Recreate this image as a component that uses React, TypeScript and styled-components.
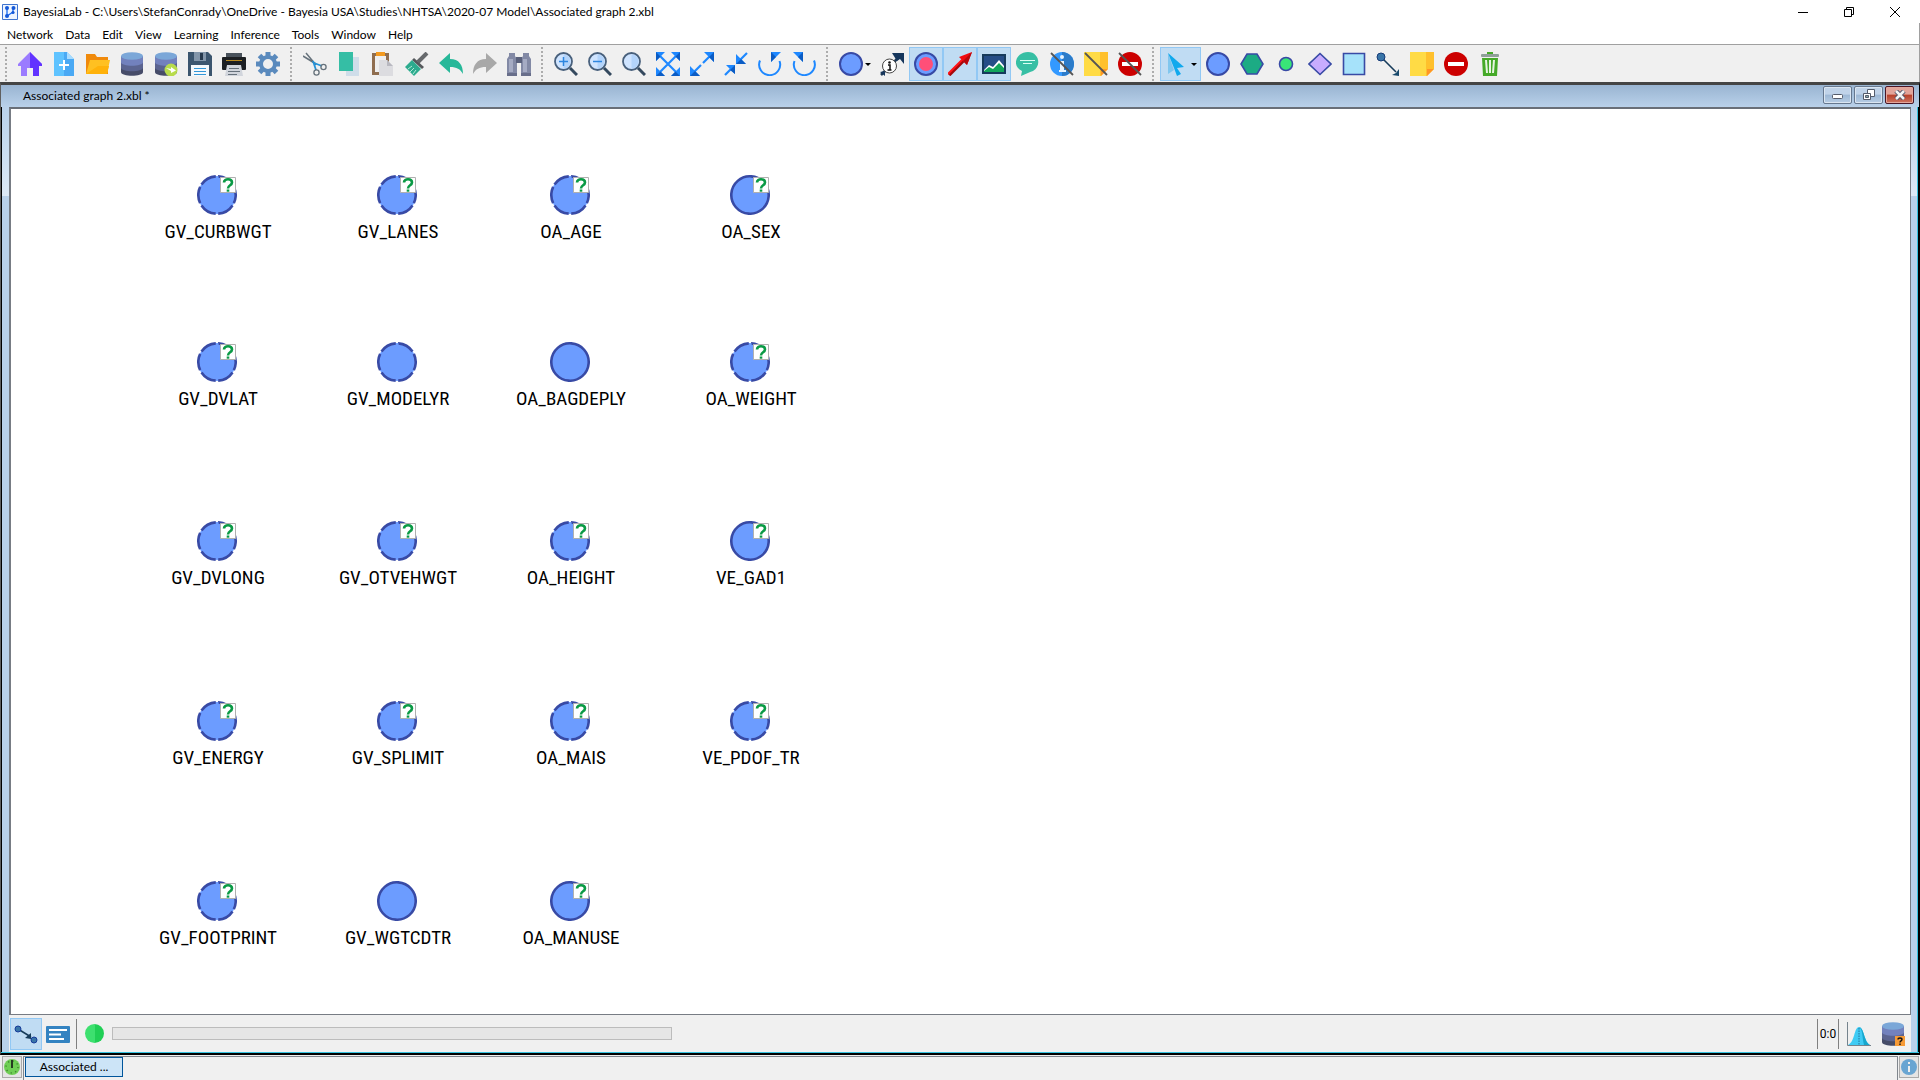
import React from "react";
import styled, { createGlobalStyle } from "styled-components";

const Global = createGlobalStyle`
  *, *::before, *::after { box-sizing: border-box; }
  body { margin: 0; background: #f0f0f0; }
  button { font: inherit; color: inherit; }
`;

const ui = `Lato, "Open Sans", sans-serif`;

const Window = styled.div`
  height: 100vh;
  display: flex;
  flex-direction: column;
  background: #f0f0f0;
  color: #000;
  font: 12px/16px ${ui};
  overflow: hidden;
`;

const TitleBar = styled.header`
  display: flex;
  align-items: center;
  height: 23px;
  padding: 0 2px;
  background: #fff;
`;

const AppIcon = styled.svg`
  width: 16px;
  height: 16px;
  display: block;
`;

const TitleText = styled.h1`
  flex: 1;
  margin: 0 0 0 5px;
  font: 12px/16px ${ui};
`;

const CaptionButton = styled.button`
  width: 46px;
  height: 22px;
  padding: 0;
  border: 0;
  background: none;
  display: grid;
  place-items: center;
`;

const MenuBar = styled.nav`
  display: flex;
  height: 21px;
  padding: 3px 1px 0;
  border-right: 1px solid #a0a0a0;
  background: #fff;
`;

const MenuItem = styled.button`
  padding: 0 6px;
  border: 0;
  background: none;
`;

const ToolBar = styled.div`
  display: flex;
  height: 38px;
  border-top: 1px solid #a0a0a0;
  border-right: 1px solid #a0a0a0;
  background: #f0f0f0;
`;

const Grip = styled.span`
  width: 13px;
  margin: 2px 0 1px;
  background: repeating-linear-gradient(#acacac 0 2px, transparent 2px 4px) 5px 0 / 2px 100% no-repeat;
`;

const ToolButton = styled.button<{ $on?: boolean; $width?: number }>`
  width: ${(p) => p.$width ?? 34}px;
  height: 34px;
  margin-top: 2px;
  padding: 0;
  border: 1px solid ${(p) => (p.$on ? "#92c8f4" : "transparent")};
  background: ${(p) => (p.$on ? "#c0dcf3" : "none")};
  display: flex;
  align-items: center;
  justify-content: center;
  gap: 2px;
`;

const Icon = styled.svg`
  width: 24px;
  height: 24px;
  flex: none;
  display: block;
`;

const Caret = styled.span`
  border: 3px solid transparent;
  border-top-color: #000;
  border-bottom: 0;
`;

const Frame = styled.section`
  flex: 1;
  min-height: 0;
  display: flex;
  flex-direction: column;
  border: 1px solid #000;
  border-left-color: #606060;
  border-top: 3px solid #444;
  border-bottom: 2px solid #000;
  background: linear-gradient(#b9d1ea, #dde9f6) 0 22px / 100% 89px no-repeat #b9d1ea;
  padding: 0 8px 0 8px;
  box-shadow: inset 0 -1px #35c3e0, inset 1px 0 #000, inset -1px 0 #000, inset -2px 0 #35c3e0;
`;

const FrameBar = styled.header`
  display: flex;
  align-items: center;
  height: 22px;
  margin: 0 -8px;
  padding: 0 5px 0 22px;
  background: linear-gradient(#99b4d1, #b9d1ea);
`;

const FrameTitle = styled.h2`
  flex: 1;
  margin: 0;
  font: 12px/16px ${ui};
`;

const FrameButtons = styled.div`
  display: flex;
  align-self: flex-start;
  gap: 2px;
  padding-top: 1px;
`;

const FrameButton = styled.button<{ $danger?: boolean }>`
  width: 29px;
  height: 18px;
  padding: 0;
  display: grid;
  place-items: center;
  border: 1px solid ${(p) => (p.$danger ? "#4a1626" : "#66788f")};
  border-radius: 2px;
  box-shadow: inset 0 0 0 1px ${(p) => (p.$danger ? "#e4a79c" : "#dbe6f2")};
  background: ${(p) =>
    p.$danger
      ? "linear-gradient(#e2a49a 45%, #b8402a 50%, #cd7562)"
      : "linear-gradient(#c0d3e9 45%, #9db8d5 50%, #b7cde5)"};
`;

const Canvas = styled.main`
  position: relative;
  flex: 1;
  min-height: 0;
  background: #fff;
  border: 1px solid #777c84;
  border-top: 2px solid #696f78;
  border-left: 2px solid #777c84;
`;

const Node = styled.figure`
  position: absolute;
  width: 140px;
  margin: -20px 0 0 -70px;
  display: flex;
  flex-direction: column;
  align-items: center;
  gap: 5px;
`;

const NodeLabel = styled.figcaption`
  padding-left: 2px;
  color: #000;
  font: 19px/24px "Roboto Condensed", Roboto, sans-serif;
  white-space: nowrap;
`;

const NodeDrawing = styled.svg`
  display: block;
  width: 40px;
  height: 40px;
`;

const StatusBar = styled.footer`
  display: flex;
  align-items: center;
  height: 37px;
  margin-bottom: 1px;
  padding: 0 6px 0 1px;
  background: #f0f0f0;
`;

const ModeButton = styled.button<{ $on?: boolean }>`
  width: 32px;
  height: 32px;
  padding: 0;
  border: 1px solid ${(p) => (p.$on ? "#92c8f4" : "transparent")};
  background: ${(p) => (p.$on ? "#c0dcf3" : "none")};
  display: grid;
  place-items: center;
`;

const Rule = styled.span`
  width: 1px;
  height: 30px;
  background: #808080;
`;

const Led = styled.span`
  width: 19px;
  height: 19px;
  margin: 0 8px;
  border-radius: 50%;
  background: linear-gradient(90deg, #3de06f 50%, #20cf55 50%);
`;

const Mode = styled.div`
  display: flex;
  margin-right: 2px;
`;

const Progress = styled.div`
  width: 560px;
  height: 13px;
  border: 1px solid #bcbcbc;
  background: #e6e6e6;
`;

const Counter = styled.output`
  width: 20px;
  text-align: center;
  font: 12px/16px Roboto, sans-serif;
`;

const Spacer = styled.span`
  flex: 1;
`;

const StatusIcons = styled.div`
  display: flex;
  gap: 10px;
  margin-left: 8px;
`;

const TaskBar = styled.footer`
  display: flex;
  gap: 1px;
  height: 25px;
  padding: 1px 1px 0 2px;
`;

const SquareButton = styled.button`
  width: 20px;
  height: 22px;
  padding: 0;
  border: 1px solid #aaa;
  background: #e4e4e4;
  display: grid;
  place-items: center;
`;

const TaskList = styled.div`
  flex: 1;
  padding: 0 1px;
  border: 1px solid #80868d;
  border-bottom: 0;
`;

const TaskButton = styled.button`
  display: block;
  width: 98px;
  height: 20px;
  padding: 0;
  border: 1px solid #00559b;
  background: #cce4f7;
  line-height: 16px;
`;

/* ---------- shared drawings ---------- */

const Disks = ({ children }: { children?: React.ReactNode }) => (
  <>
    <path d="M1 4v16c0 5 22 5 22 0V4z" fill="#464c68" />
    <path d="M1 4v11.500c0 5 22 5 22 0V4z" fill="#5b6490" />
    <path d="M1 4v6c0 5 22 5 22 0V4z" fill="#7281bd" />
    <ellipse cx="12" cy="4" rx="11" ry="3.800" fill="#7ba7d8" />
    {children}
  </>
);

const Lens = ({ children }: { children?: React.ReactNode }) => (
  <>
    <path d="M16 16l7 7" stroke="#34495e" strokeWidth="3" />
    <circle cx="9.500" cy="9.500" r="8.500" fill="#cfe4ff" stroke="#48607c" strokeWidth="1.800" />
    <path d="M9.500 2.500a7 7 0 0 1 0 14z" fill="#b3d4fb" />
    {children}
  </>
);

const Slash = () => <path d="M1 1l22 22" stroke="#555" strokeWidth="1.800" />;

const NoteShape = () => (
  <>
    <path d="M0 0h24v17l-7 7H0z" fill="#ffdb45" />
    <path d="M16 0h8v17h-7v7h-1z" fill="#ffc02c" />
    <path d="M17 17h7l-7 7z" fill="#ff9526" />
  </>
);

const StopShape = () => (
  <>
    <circle cx="12" cy="12" r="12" fill="#cc0000" />
    <path d="M4 10h16v4H4z" fill="#fff" />
  </>
);

const BlueDisc = () => <circle cx="12" cy="12" r="11" fill="#6c9cff" stroke="#384aa5" strokeWidth="2" />;

const Rotate = () => (
  <>
    <path d="M2 8.500A10.500 10.500 0 1 0 21.500 9" fill="none" stroke="#1e88ff" strokeWidth="2" />
    <path d="M13 0h10L13 10z" fill="#1e88ff" />
    <path d="M13 0l5 5-5 5z" fill="#0b5cc4" />
  </>
);

const icons: Record<string, React.ReactNode> = {
  home: (
    <>
      <path d="M12 0L0 12v2h3v10h6v-8h6v8h6V14h3v-2z" fill="#9b7bff" />
      <path d="M12 0l12 12v2h-3v10h-6v-8h-3z" fill="#6233ff" />
    </>
  ),
  create: (
    <>
      <path d="M2 0h13l7 7v17H2z" fill="#5fc3ff" />
      <path d="M12 0h3v7h7v17H12z" fill="#4aa9f4" />
      <path d="M15 0l7 7h-7z" fill="#a9dcff" />
      <path d="M12 8v10M7 13h10" stroke="#fff" strokeWidth="2" />
    </>
  ),
  open: (
    <>
      <path d="M0 2h9l2 3h11v17H0z" fill="#f08a0c" />
      <path d="M4 8h20l-3 14H0z" fill="#ffc021" />
      <path d="M0 22l12-8h11l-2 8z" fill="#ffb20a" />
    </>
  ),
  database: <Disks />,
  databaseLink: (
    <Disks>
      <circle cx="17" cy="18" r="6.500" fill="#b8dc4c" />
      <path d="M12 16l5 1v-2l5 3.500-5 2.500v-2z" fill="#fff" />
    </Disks>
  ),
  save: (
    <>
      <path d="M0 0h20l4 4v20H0z" fill="#3b556e" />
      <path d="M6 0h12v9H6z" fill="#8396aa" />
      <path d="M12 1h3v7h-3z" fill="#26394d" />
      <path d="M3 13h18v11H3z" fill="#f4f8fb" />
      <path d="M6 16.500h12M6 19.500h12M6 22.500h12" stroke="#3297d8" />
    </>
  ),
  print: (
    <>
      <path d="M4 1h16v6H4z" fill="#49525b" />
      <rect y="5" width="24" height="13" rx="1" fill="#1c1f22" />
      <path d="M4 8.500h16" stroke="#b98b22" />
      <path d="M5 13h14l2 11H3z" fill="#d1d5dc" />
      <path d="M7 16.500h10M6 19.500h12M6 22.500h9" stroke="#66717b" />
    </>
  ),
  settings: (
    <>
      <g stroke="#5a8abd" strokeWidth="5">
        <path d="M12 0v24M0 12h24" />
        <path d="M3.500 3.500l17 17M20.500 3.500l-17 17" />
      </g>
      <circle cx="12" cy="12" r="7" fill="#f0f0f0" stroke="#5a8abd" strokeWidth="4" />
    </>
  ),
  cut: (
    <>
      <path d="M3 1l10 12M0 4l13 8" stroke="#66727c" strokeWidth="1.500" />
      <path d="M10 9l3 9M11 11l8 3" stroke="#2492d8" strokeWidth="1.800" />
      <g fill="none" stroke="#66727b" strokeWidth="1.300">
        <circle cx="13.500" cy="20.500" r="2.600" />
        <circle cx="20.500" cy="15" r="2.600" />
      </g>
    </>
  ),
  copy: (
    <>
      <path d="M9 5h13v19H9z" fill="#cfdde9" />
      <path d="M2 0h14v19H2z" fill="#35bea5" />
    </>
  ),
  paste: (
    <>
      <path d="M1 1h17v22H1z" fill="#8f6d4f" />
      <path d="M4 4h11v16H4z" fill="#eee" />
      <path d="M5 0h9v4H5z" fill="#f39a20" />
      <path d="M8 8h8l6 6v10H8z" fill="#dcdce0" />
      <path d="M16 8l6 6h-6z" fill="#b8b8c0" />
    </>
  ),
  brush: (
    <>
      <path d="M13 10l9-9" stroke="#66696c" strokeWidth="4" />
      <path d="M9 6l10 9-2 2L7 8z" fill="#55595c" />
      <path d="M7 8l9 9-7 7L0 15z" fill="#2cab8e" />
      <path d="M3 17l4-3M5 20l4-4M8 22l3-4" stroke="#b4ead8" />
    </>
  ),
  undo: <path d="M11 1v6c9 0 13 6 13 15-3-5-6-7-13-7v6L0 11z" fill="#27b899" />,
  redo: <path d="M13 1v6C4 7 0 13 0 22c3-5 6-7 13-7v6l11-10z" fill="#a8a8a8" />,
  find: (
    <>
      <path d="M2 1h6v3l2 3v17H0V7l2-3zM16 1h6v3l2 3v17H14V7l2-3z" fill="#8289a5" />
      <path d="M9 5h6v6H9z" fill="#59607b" />
      <path d="M2 7h4v13H2zM16 7h4v13h-4z" fill="#a5abc3" />
      <path d="M0 21h10v3H0zM14 21h10v3H14z" fill="#686e8a" />
    </>
  ),
  zoomIn: (
    <Lens>
      <path d="M9.500 5v9M5 9.500h9" stroke="#2d86e0" strokeWidth="1.500" />
    </Lens>
  ),
  zoomOut: (
    <Lens>
      <path d="M5 9.500h9" stroke="#2d86e0" strokeWidth="1.500" />
    </Lens>
  ),
  zoom: <Lens />,
  expandAll: (
    <>
      <path d="M3 3l18 18M21 3L3 21" stroke="#1e88ff" strokeWidth="2.200" />
      <path d="M0 0h9L0 9zM24 0v9l-9-9zM0 24v-9l9 9zM24 24h-9l9-9z" fill="#1e88ff" />
      <path d="M0 0l4.500 4.500L0 9zM24 0v9l-4.500-4.500zM0 24l4.500-4.500L9 24zM24 24h-9l4.500-4.500z" fill="#0b5cc4" />
    </>
  ),
  expand: (
    <>
      <path d="M3 21l8-8M13 11l8-8" stroke="#1e88ff" strokeWidth="2.200" />
      <path d="M14 0h10v10zM0 14v10h10z" fill="#1e88ff" />
      <path d="M24 0v10l-5-5zM0 24h10l-5-5z" fill="#0b5cc4" />
    </>
  ),
  collapse: (
    <>
      <path d="M1 23l8-8M15 9l8-8" stroke="#1e88ff" strokeWidth="2.200" />
      <path d="M12 2v10h10zM2 13h9v9z" fill="#1e88ff" />
      <path d="M12 12h10l-5-5zM11 13v9l-5-4z" fill="#0b5cc4" />
    </>
  ),
  rotateLeft: <Rotate />,
  rotateRight: (
    <g transform="matrix(-1 0 0 1 24 0)">
      <Rotate />
    </g>
  ),
  disc: <BlueDisc />,
  arcInfo: (
    <>
      <path d="M1 23L19 5" stroke="#1f3a56" strokeWidth="2.500" />
      <path d="M12 1h12v11l-4-5-3 2zM0 20l5-1v5z" fill="#16365c" />
      <circle cx="9.500" cy="14" r="7" fill="#fff" stroke="#444" />
      <circle cx="9.500" cy="10.500" r="1.300" fill="#111" />
      <path d="M8 13h2v5M7.500 18h4" fill="none" stroke="#111" strokeWidth="1.500" />
    </>
  ),
  monitor: (
    <>
      <circle cx="12" cy="12" r="11" fill="#6c9cff" stroke="#384aa5" strokeWidth="2" />
      <circle cx="12" cy="12" r="7" fill="#ff4f78" />
    </>
  ),
  redArrow: (
    <>
      <path d="M1 23L19 5" stroke="#a5080c" strokeWidth="3.500" />
      <path d="M0 22L18 4" stroke="#ff1418" strokeWidth="2" />
      <path d="M24 0l-5 13-8-8z" fill="#f00b10" />
      <path d="M24 0l-5 13-4-4z" fill="#b5080c" />
    </>
  ),
  picture: (
    <>
      <path d="M0 2h24v20H0z" fill="#173b5c" />
      <path d="M2 4h20v16H2z" fill="#254d87" />
      <path d="M2 18l5-5 4 2 6-7 5 6v6H2z" fill="#fff" />
      <path d="M2 20v-1l5-4 4 2 6-6 5 5v4z" fill="#12a55b" />
    </>
  ),
  comment: (
    <>
      <path d="M12 0c11 0 14 14 5 19-4 1-7 3-12 5l1-5C-5 14 0 0 12 0z" fill="#37bfa4" />
      <path d="M4 8.500h15M7 11.500h9" stroke="#d9fff4" />
    </>
  ),
  infoOff: (
    <>
      <circle cx="12" cy="12" r="12" fill="#3399ff" />
      <path d="M12 0a12 12 0 0 1 0 24z" fill="#2b7bc9" />
      <circle cx="12" cy="5" r="2" fill="#e7f4ff" />
      <path d="M9 9h5v9h2v2H9v-2h1v-7H9z" fill="#e7f4ff" />
      <Slash />
    </>
  ),
  noteOff: (
    <>
      <NoteShape />
      <Slash />
    </>
  ),
  stopOff: (
    <>
      <StopShape />
      <Slash />
    </>
  ),
  pointer: (
    <>
      <path d="M3 1l6 17-6 4z" fill="#80c6ee" />
      <path d="M3 1l16 14-7 1 4 6-4 2-3-8z" fill="#11a9ed" />
    </>
  ),
  hexagon: <path d="M7 2h10l6 10-6 10H7L1 12z" fill="#1cab84" stroke="#384aa5" strokeWidth="1.600" />,
  smallDisc: <circle cx="12" cy="12" r="6.500" fill="#39e577" stroke="#384aa5" strokeWidth="1.600" />,
  diamond: <path d="M12 1.500L23 12 12 22.500 1 12z" fill="#c8acff" stroke="#384aa5" strokeWidth="1.600" />,
  square: <path d="M1.500 1.500h21v21h-21z" fill="#a6e2fa" stroke="#384aa5" strokeWidth="1.600" />,
  arc: (
    <>
      <path d="M5 5l15 15" stroke="#173c5a" strokeWidth="1.600" />
      <circle cx="5" cy="5" r="4" fill="#3975a8" stroke="#173c78" />
      <path d="M23 17v7l-7-1 4-2z" fill="#17496c" />
    </>
  ),
  note: <NoteShape />,
  stop: <StopShape />,
  trash: (
    <>
      <path d="M9 2V0h6v2M4 6h16l-1 18H5z" fill="#45aa28" />
      <path d="M8 8l1 13M12 8v13M16 8l-1 13" stroke="#e7f5e2" strokeWidth="2" />
      <rect x="3" y="2" width="18" height="3" rx="1" fill="#8fa098" />
    </>
  ),
  arcMode: (
    <>
      <path d="M4 7l13 8" stroke="#173c5a" strokeWidth="1.500" />
      <path d="M17 11v6l-6-1z" fill="#173c5a" />
      <circle cx="4" cy="7" r="3" fill="#3975a8" stroke="#173c9a" />
      <circle cx="20" cy="18" r="3" fill="#3975a8" stroke="#173c9a" />
    </>
  ),
  textMode: (
    <>
      <rect y="4" width="24" height="17" rx="1" fill="#3483c1" />
      <path d="M3 8h18M3 12.500h12M3 17h15" stroke="#fff" strokeWidth="2" />
    </>
  ),
  curve: (
    <>
      <path d="M1 23C8 20 7 5 12 5s5 15 11 18z" fill="#3fcbf4" />
      <path d="M12 5c5 0 5 15 11 18h-6C15 16 16 7 12 5z" fill="#17a7cd" />
      <path d="M12 6v17" stroke="#25729a" strokeDasharray="1.500 1" />
      <path d="M.5 0v23.500H24" fill="none" stroke="#75838d" />
    </>
  ),
  databaseMissing: (
    <Disks>
      <rect x="14" y="14" width="10" height="10" fill="#f69a35" />
      <path d="M17 17.500c0-2 4-2 4 0 0 1.500-2 1.200-2 3M19 21.500v1.500" fill="none" stroke="#111" strokeWidth="1.400" />
    </Disks>
  ),
};

const Glyph = ({ name }: { name: string }) => (
  <Icon viewBox="0 0 24 24" aria-hidden="true">
    {icons[name]}
  </Icon>
);

/* ---------- data ---------- */

type Tool = { icon: string; label: string; on?: boolean; width?: number };

const t = (icon: string, label: string, on = false, width?: number): Tool => ({ icon, label, on, width });

const groups: Tool[][] = [
  [
    t("home", "Home"), t("create", "New"), t("open", "Open"), t("database", "Open data"),
    t("databaseLink", "Associate data"), t("save", "Save"), t("print", "Print"), t("settings", "Settings"),
  ],
  [
    t("cut", "Cut"), t("copy", "Copy"), t("paste", "Paste"), t("brush", "Format"),
    t("undo", "Undo"), t("redo", "Redo"), t("find", "Find"),
  ],
  [
    t("zoomIn", "Zoom in"), t("zoomOut", "Zoom out"), t("zoom", "Default zoom"), t("expandAll", "Best fit"),
    t("expand", "Expand"), t("collapse", "Shrink"), t("rotateLeft", "Rotate left"), t("rotateRight", "Rotate right"),
  ],
  [
    t("disc", "Node style", false, 41), t("arcInfo", "Arc information"), t("monitor", "Monitors", true),
    t("redArrow", "Arcs", true), t("picture", "Images", true), t("comment", "Comments"),
    t("infoOff", "Hide information"), t("noteOff", "Hide notes"), t("stopOff", "Hide constraints"),
  ],
  [
    t("pointer", "Select", true, 41), t("disc", "Node"), t("hexagon", "Function"), t("smallDisc", "Constraint"),
    t("diamond", "Utility"), t("square", "Decision"), t("arc", "Arc"), t("note", "Note"),
    t("stop", "Forbidden arc"), t("trash", "Delete"),
  ],
];

const menus = ["Network", "Data", "Edit", "View", "Learning", "Inference", "Tools", "Window", "Help"];

type NodeData = { name: string; x: number; y: number; solid?: boolean; known?: boolean };

const nodes: NodeData[] = [
  { name: "GV_CURBWGT", x: 206, y: 86 },
  { name: "GV_LANES", x: 386, y: 86 },
  { name: "OA_AGE", x: 559, y: 86 },
  { name: "OA_SEX", x: 739, y: 86, solid: true },
  { name: "GV_DVLAT", x: 206, y: 253 },
  { name: "GV_MODELYR", x: 386, y: 253, known: true },
  { name: "OA_BAGDEPLY", x: 559, y: 253, solid: true, known: true },
  { name: "OA_WEIGHT", x: 739, y: 253 },
  { name: "GV_DVLONG", x: 206, y: 432 },
  { name: "GV_OTVEHWGT", x: 386, y: 432 },
  { name: "OA_HEIGHT", x: 559, y: 432 },
  { name: "VE_GAD1", x: 739, y: 432, solid: true },
  { name: "GV_ENERGY", x: 206, y: 612 },
  { name: "GV_SPLIMIT", x: 386, y: 612 },
  { name: "OA_MAIS", x: 559, y: 612 },
  { name: "VE_PDOF_TR", x: 739, y: 612 },
  { name: "GV_FOOTPRINT", x: 206, y: 792 },
  { name: "GV_WGTCDTR", x: 386, y: 792, solid: true, known: true },
  { name: "OA_MANUSE", x: 559, y: 792, solid: true },
];

const GraphNode = ({ node }: { node: NodeData }) => (
  <Node style={{ left: node.x, top: node.y }}>
    <NodeDrawing viewBox="0 0 40 40" aria-hidden="true">
      <circle cx="20" cy="20" r="19" fill="#6c9cff" />
      <circle
        cx="20"
        cy="20"
        r="18.700"
        fill="none"
        stroke="#384aa5"
        strokeWidth="2.600"
        pathLength="360"
        strokeDasharray={node.solid ? undefined : "52 8"}
        transform="rotate(94 20 20)"
      />
      {!node.known && (
        <>
          <path d="M23.500 2.500h15v15h-15z" fill="#fff" stroke="#b0b0b0" />
          <path d="M27 7.500c0-4.300 8-4.300 8 0 0 3-4 2.500-4 6" fill="none" stroke="#0a9a45" strokeWidth="2.600" />
          <path d="M29.700 14.500h2.600v2.200h-2.600z" fill="#0a9a45" />
        </>
      )}
    </NodeDrawing>
    <NodeLabel>{node.name}</NodeLabel>
  </Node>
);

export default function App() {
  return (
    <Window>
      <Global />
      <TitleBar>
        <AppIcon viewBox="0 0 16 16" aria-hidden="true">
          <path d="M.5 .5h15v15H.5z" fill="#eef5ff" stroke="#3f74cf" />
          <path d="M5 4v8l6-4V4" fill="none" stroke="#1769ef" strokeWidth="1.300" />
          <g fill="#1458d8">
            <circle cx="5" cy="4" r="2" />
            <circle cx="5" cy="12" r="2" />
            <circle cx="11.500" cy="4" r="2" />
            <circle cx="11" cy="8.500" r="1.600" />
          </g>
        </AppIcon>
        <TitleText>
          {"BayesiaLab - C:\\Users\\StefanConrady\\OneDrive - Bayesia USA\\Studies\\NHTSA\\2020-07 Model\\Associated graph 2.xbl"}
        </TitleText>
        <CaptionButton aria-label="Minimize">
          <svg width="10" height="10"><path d="M0 5.500h10" stroke="#000" /></svg>
        </CaptionButton>
        <CaptionButton aria-label="Restore">
          <svg width="10" height="10"><path d="M.5 2.500h7v7h-7zM2.500 2V.5h7v7H8" fill="none" stroke="#000" /></svg>
        </CaptionButton>
        <CaptionButton aria-label="Close">
          <svg width="10" height="10"><path d="M0 0l10 10M10 0L0 10" stroke="#000" /></svg>
        </CaptionButton>
      </TitleBar>

      <MenuBar>
        {menus.map((m) => (
          <MenuItem key={m}>{m}</MenuItem>
        ))}
      </MenuBar>

      <ToolBar role="toolbar">
        {groups.map((group, i) => (
          <React.Fragment key={i}>
            <Grip />
            {group.map((tool) => (
              <ToolButton key={tool.label} aria-label={tool.label} $on={tool.on} $width={tool.width}>
                <Glyph name={tool.icon} />
                {tool.width && <Caret />}
              </ToolButton>
            ))}
          </React.Fragment>
        ))}
      </ToolBar>

      <Frame>
        <FrameBar>
          <FrameTitle>Associated graph 2.xbl *</FrameTitle>
          <FrameButtons>
            <FrameButton aria-label="Minimize graph">
              <svg width="12" height="10"><rect x=".5" y="4.500" width="10" height="4" rx="1" fill="#fff" stroke="#555c6b" /></svg>
            </FrameButton>
            <FrameButton aria-label="Restore graph">
              <svg width="12" height="12">
                <g fill="#fff" stroke="#555c6b"><path d="M4.500 .5h7v7h-7z" /><path d="M.5 4.500h7v6h-7z" /><path d="M2.500 6.500h3v2h-3z" fill="#8aa" /></g>
              </svg>
            </FrameButton>
            <FrameButton aria-label="Close graph" $danger>
              <svg width="12" height="10">
                <path d="M2 1l8 8M10 1L2 9" stroke="#505468" strokeWidth="4.500" />
                <path d="M2 1l8 8M10 1L2 9" stroke="#f4f4f4" strokeWidth="2.500" />
              </svg>
            </FrameButton>
          </FrameButtons>
        </FrameBar>

        <Canvas>
          {nodes.map((n) => (
            <GraphNode key={n.name} node={n} />
          ))}
        </Canvas>

        <StatusBar>
          <Mode>
            <ModeButton aria-label="Modeling mode" $on><Glyph name="arcMode" /></ModeButton>
            <ModeButton aria-label="Validation mode"><Glyph name="textMode" /></ModeButton>
          </Mode>
          <Rule />
          <Led />
          <Progress role="progressbar" aria-label="Task progress" />
          <Spacer />
          <Rule />
          <Counter>0:0</Counter>
          <Rule />
          <StatusIcons>
            <Glyph name="curve" />
            <Glyph name="databaseMissing" />
          </StatusIcons>
        </StatusBar>
      </Frame>

      <TaskBar>
        <SquareButton aria-label="Power">
          <svg width="16" height="16">
            <circle cx="8" cy="8" r="8" fill="#6fce55" />
            <circle cx="8" cy="8" r="6" fill="none" stroke="#3f8a30" strokeWidth="1.500" strokeDasharray="1.200 3.500" />
            <path d="M8 1v8" stroke="#263a21" strokeWidth="2" />
          </svg>
        </SquareButton>
        <TaskList>
          <TaskButton>Associated ...</TaskButton>
        </TaskList>
        <SquareButton aria-label="Information">
          <svg width="16" height="16">
            <circle cx="8" cy="8" r="8" fill="#69a5d2" />
            <path d="M7 3h2v2H7zM7 7h2v6H7z" fill="#eee" />
          </svg>
        </SquareButton>
      </TaskBar>
    </Window>
  );
}
